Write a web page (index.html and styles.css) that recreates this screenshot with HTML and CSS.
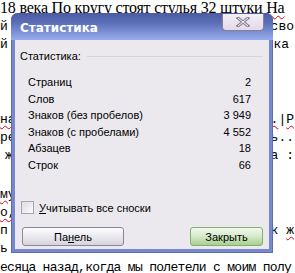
FILE: index.html
```html
<!DOCTYPE html>
<html lang="ru">
	<head>
		<meta charset="UTF-8" />
		<title>Статистика</title>
		<link rel="stylesheet" href="styles.css">
	</head>
	<body>
		<div class="doc">
			<div class="line first">18 века По кругу стоят стулья 32 штуки <span class="err">На</span></div>
			<div class="line"><span>й</span><span>сво</span></div>
			<div class="line"><span>й</span><span class="pad">ска</span></div>
			<div class="gap big"></div>
			<div class="line"><span class="err">на</span><span><span class="err">ек.</span>|<span class="err">Р</span></span></div>
			<div class="line"><span>ре</span><span>ть..</span></div>
			<div class="line"><span class="pad">ж</span><span>ала :</span></div>
			<div class="gap small"></div>
			<div class="line"><span class="err">му</span><span></span></div>
			<div class="line"><span class="err">о,</span><span></span></div>
			<div class="line"><span>п</span><span>ок <span class="err">ж</span></span></div>
			<div class="line"><span>ь в</span><span></span></div>
			<div class="line last">есяца назад,когда мы полетели с моим полу</div>
		</div>

		<div class="dialog">
			<div class="titlebar">
				<span class="title">Статистика</span>
				<button class="close">
					<svg width="16" height="10" viewBox="0 0 16 10">
						<path d="M3 1 L13 9 M13 1 L3 9" stroke="#8a7f95" stroke-width="3" stroke-linecap="square" />
						<path d="M3 1 L13 9 M13 1 L3 9" stroke="#fff" stroke-width="1" />
					</svg>
				</button>
			</div>
			<div class="content">
				<div class="group-head">
					<span>Статистика:</span>
					<div class="rule"></div>
				</div>
				<div class="stats">
					<div class="row"><span>Страниц</span><span>2</span></div>
					<div class="row"><span>Слов</span><span>617</span></div>
					<div class="row"><span>Знаков (без пробелов)</span><span>3 949</span></div>
					<div class="row"><span>Знаков (с пробелами)</span><span>4 552</span></div>
					<div class="row"><span>Абзацев</span><span>18</span></div>
					<div class="row"><span>Строк</span><span>66</span></div>
				</div>
				<label class="check">
					<span class="box"></span>
					<span><u>У</u>читывать все сноски</span>
				</label>
				<div class="buttons">
					<button class="btn panel">Па<u>н</u>ель</button>
					<button class="btn ok">Закрыть</button>
				</div>
			</div>
		</div>
	</body>
</html>
```

FILE: styles.css
```css
body {
	margin: 0;
	width: 295px;
	height: 273px;
	overflow: hidden;
	background: #fff;
	position: relative;
}

.doc {
	font-family: "Liberation Mono", monospace;
	font-size: 13px;
	color: #000;
}

.doc .line {
	height: 18px;
	line-height: 18px;
	display: flex;
	justify-content: space-between;
	padding-right: 1px;
	white-space: nowrap;
}

.doc .line.first {
	font-family: "Liberation Serif", serif;
	font-size: 16px;
	height: 18px;
	line-height: 16px;
	display: block;
	letter-spacing: -0.2px;
}

.doc .line.last {
	display: block;
	margin-top: 1px;
	letter-spacing: -0.7px;
}

.doc .gap.big {
	height: 57px;
}

.doc .gap.small {
	height: 21px;
}

.doc .pad {
	padding: 0 5px;
}

.err {
	text-decoration: underline wavy #e00000;
	text-decoration-thickness: 1px;
	text-underline-offset: 2px;
}

.dialog {
	position: absolute;
	left: 11px;
	top: 13px;
	width: 262px;
	height: 240px;
	background: #7888cc;
	border-radius: 7px 7px 0 0;
	display: flex;
	flex-direction: column;
	box-shadow: inset 0 0 0 1px #5b6cb4;
	font-family: "Liberation Sans", sans-serif;
	font-size: 11px;
	color: #000;
}

.titlebar {
	height: 27px;
	border-radius: 7px 7px 0 0;
	background: linear-gradient(#4a5ba3 0%, #5a6db6 35%, #7a8fd6 70%, #98aceb 100%);
	display: flex;
	align-items: center;
	justify-content: space-between;
	padding: 0 8px 0 9px;
}

.title {
	color: #fff;
	font-family: "DejaVu Sans", sans-serif;
	font-weight: bold;
	font-size: 12px;
	margin-top: 2px;
}

.close {
	width: 42px;
	height: 17px;
	margin-top: -9px;
	margin-right: 1px;
	border: 1px solid #8b7e98;
	border-top: none;
	border-radius: 0 0 4px 4px;
	background: linear-gradient(#f4eef6, #e4d9e8);
	display: flex;
	align-items: center;
	justify-content: center;
	padding: 0;
}

.content {
	flex: 1;
	margin: 0 4px 4px 4px;
	background: #ebe9ee;
	padding: 9px 5px 0 5px;
	display: flex;
	flex-direction: column;
}

.group-head {
	display: flex;
	align-items: center;
	gap: 6px;
	height: 14px;
}

.group-head .rule {
	flex: 1;
	height: 1px;
	background: #d5d3db;
	margin-right: 1px;
}

.stats {
	padding: 11px 13px 0 8px;
}

.row {
	display: flex;
	justify-content: space-between;
	height: 16.5px;
	line-height: 16px;
}

.check {
	display: flex;
	align-items: center;
	gap: 5px;
	margin-top: 28px;
	padding-left: 1px;
}

.check .box {
	width: 11px;
	height: 11px;
	border: 1px solid #a3a6b4;
	background: linear-gradient(135deg, #dcdce2, #fbfbfc);
}

.buttons {
	display: flex;
	justify-content: space-between;
	margin-top: 13px;
	padding: 0 1px 0 2px;
}

.btn {
	height: 19px;
	font-family: "Liberation Sans", sans-serif;
	font-size: 11px;
	color: #000;
	border-radius: 3px;
	padding: 0;
}

.btn.panel {
	width: 102px;
	border: 1px solid #8a8796;
	background: linear-gradient(#fcfcfd, #ebe9f0 50%, #d6d3de);
}

.btn.ok {
	width: 73px;
	border: 1px solid #83b06c;
	background: linear-gradient(#f2f8ee, #d5e9c9 50%, #a8cf8f);
}
```
